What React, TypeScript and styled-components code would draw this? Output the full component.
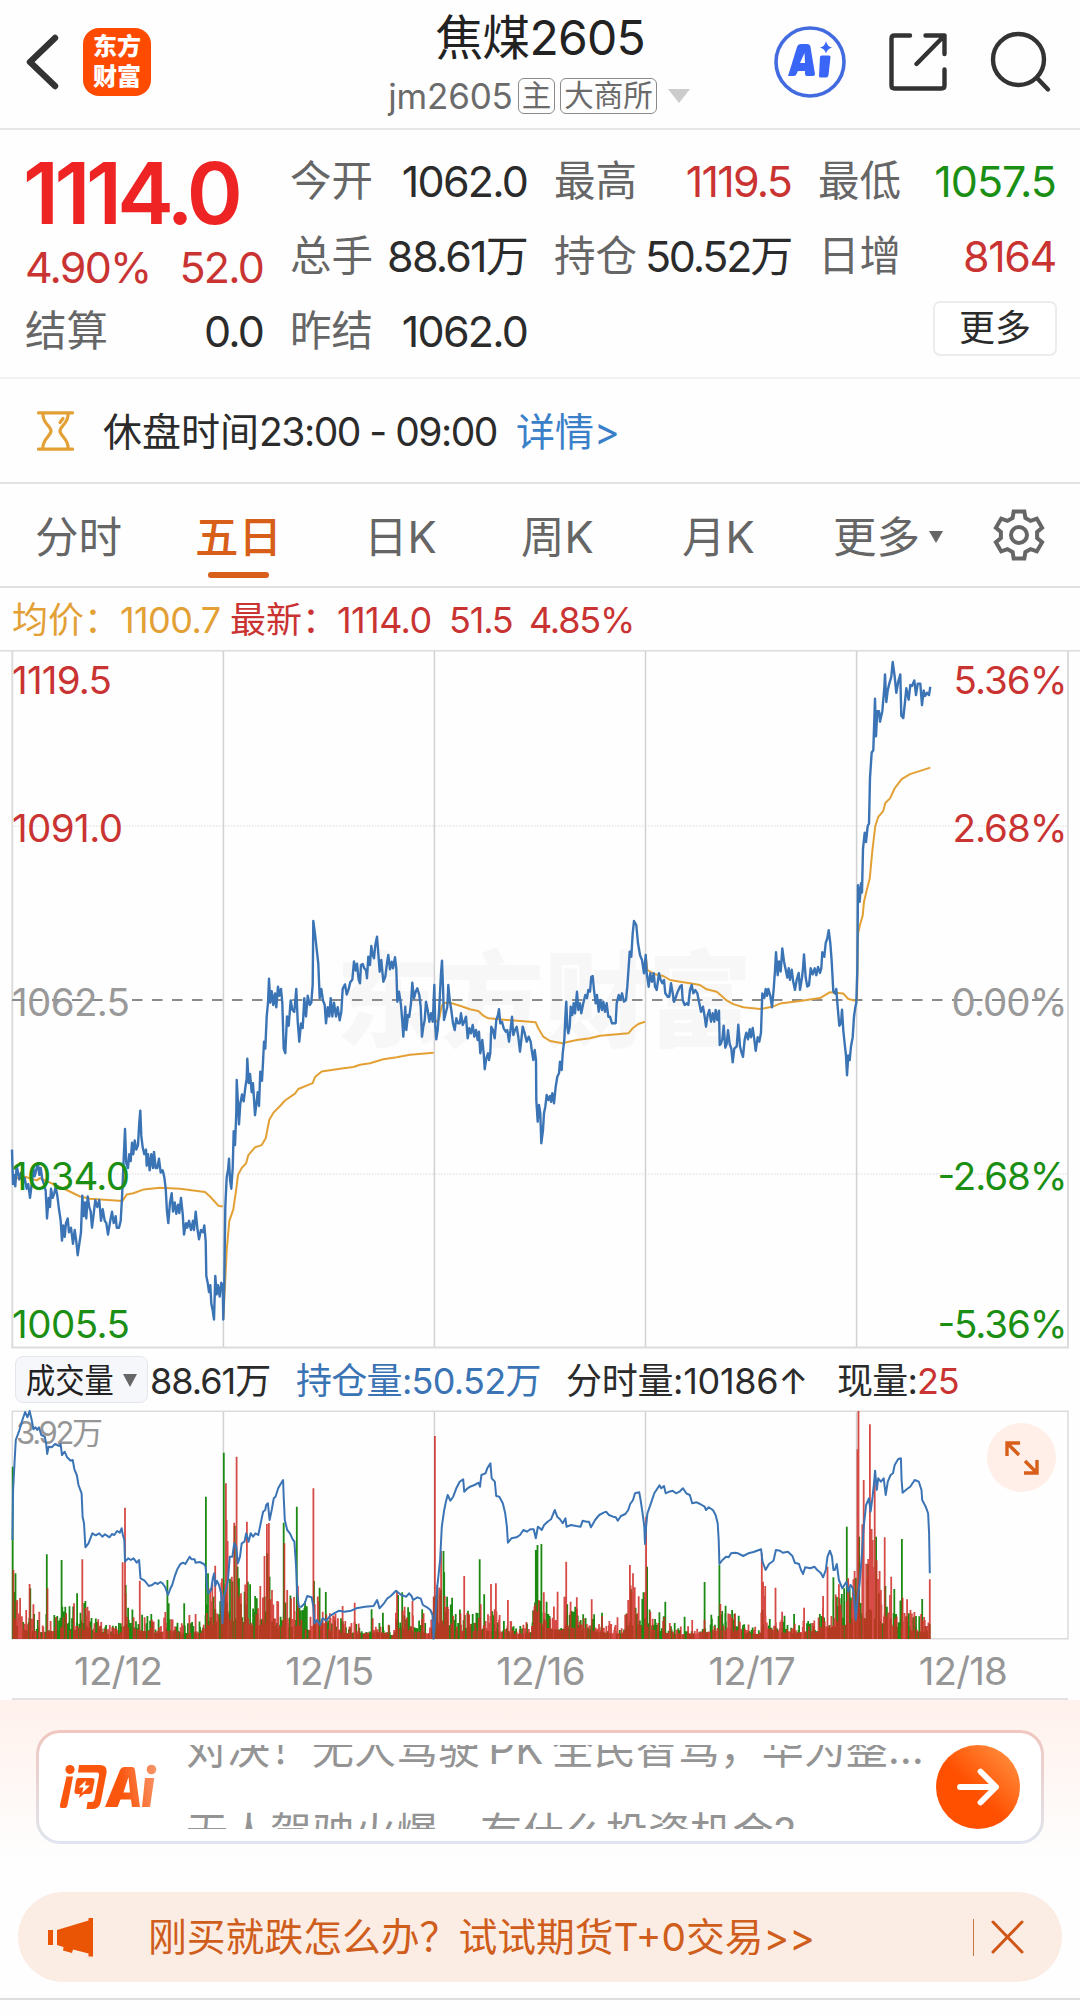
import React from "react";
import styled, { createGlobalStyle } from "styled-components";

const RED = "#c93432";
const GREEN = "#1a8f14";
const BLUE = "#3b74b5";
const ORANGE = "#d75f1a";
const AMBER = "#e2a035";

const GlobalStyle = createGlobalStyle`
  * { box-sizing: border-box; }
  body {
    margin: 0;
    background: #fefefe;
    font-family: Inter, "Noto Sans CJK SC", sans-serif;
    line-height: 1.2;
    color: #2b2b2b;
  }
`;

/* ---------- chart data ---------- */

type Piece = { ox: number; oy: number; sx: number; sy: number; p: number[] };

const left = (p: number[]): Piece => ({ ox: 0, oy: 640, sx: 3, sy: 2.178, p });
const mid = (p: number[]): Piece => ({ ox: 360, oy: 840, sx: 3, sy: 3, p });
const right = (p: number[]): Piece => ({ ox: 720, oy: 640, sx: 3, sy: 2.178, p });
const lowLeft = (p: number[]): Piece => ({ ox: 0, oy: 1340, sx: 2.904, sy: 3, p });
const lowRight = (p: number[]): Piece => ({ ox: 540, oy: 1340, sx: 2.904, sy: 3, p });

const toPoints = (pieces: Piece[]) =>
  pieces
    .map(({ ox, oy, sx, sy, p }) => {
      const out: string[] = [];
      for (let i = 0; i < p.length; i += 2) {
        out.push(`${(ox + p[i] / sx).toFixed(1)},${(oy + p[i + 1] / sy).toFixed(1)}`);
      }
      return out.join(" ");
    })
    .join(" ");

const PRICE = [
  left([36,1110,39,1185,42,1165,46,1190,50,1145,54,1160,58,1175,63,1160,68,1185,74,1172,80,1195,85,1185,90,1215,96,1180,100,1150,104,1168,110,1150,114,1140,118,1165,122,1150,127,1175,132,1185,137,1200,141,1260,146,1215,150,1235,153,1195,158,1215,163,1205,167,1190,172,1210,177,1240,182,1265,186,1308,190,1275,194,1300,198,1270,203,1260,207,1290,213,1280,219,1315,224,1285,229,1310,233,1340,238,1315,243,1290,247,1210,251,1255,255,1225,259,1260,263,1212,268,1235,272,1245,276,1280,281,1250,286,1220,292,1235,298,1220,303,1265,308,1240,314,1265,319,1270,324,1295,330,1268,336,1245,341,1270,347,1255,350,1280,357,1280,362,1265,366,1215,371,1130,375,1065,379,1140,384,1150,388,1120,392,1135,396,1095,400,1120,404,1090,409,1110,414,1100,418,1050,421,1025,424,1080,428,1105,433,1120,438,1110,440,1145,444,1120,449,1155,454,1120,459,1150,462,1115,467,1150,472,1150,477,1130,482,1160,488,1155,493,1170,497,1195,501,1245,505,1270,510,1225,515,1205,519,1245,524,1225,529,1250,534,1230,538,1248,543,1215,548,1250,552,1295,558,1270,562,1280,567,1265,573,1285,579,1265,582,1285,587,1245,592,1280,597,1305,603,1285,609,1290,613,1275,617,1310,619,1385,623,1400,627,1420,631,1405,634,1445,638,1460,642,1480,646,1385,650,1425,654,1405,659,1430,664,1400,668,1405,670,1480,673,1400,676,1235,680,1170,684,1155,687,1130,690,1175,694,1195,698,1150,701,1070,705,1100,709,1030,710,958,714,1010,717,1055,721,1010,726,990,731,1005,736,975,740,955,742,912,746,965,750,945,755,985,759,965,765,1035,770,1005,773,985,777,1015,781,940,786,960,789,920,792,875,796,890,800,820,804,790,807,738,811,790,815,765,820,795,825,770,829,800,834,755,838,775,843,760,847,790,851,890,856,900,861,820,866,840,872,785,877,805,883,810,889,760,893,830,898,875,903,835,908,845,913,780,918,820,923,775,929,795,934,790,938,750,940,612,945,640,951,680,955,705,959,780,964,760,969,785,974,795,978,835,983,800,988,820,992,780,997,820,1002,790,1008,820,1013,800,1019,828,1024,810,1028,760,1035,750,1040,772,1046,760,1051,745,1057,740,1062,700,1067,720,1071,705,1076,740]),
  mid([0,430,3,375,8,372,13,385,18,390,21,415,25,350,30,375,34,318,38,345,42,355,46,315,51,290,55,340,59,395,64,360,70,425,76,410,81,370,85,345,90,388,95,365,99,385,105,352,109,385,112,485,117,455,123,495,127,545,130,590,136,500,139,570,144,525,148,530,153,490,157,428,162,475,167,455,172,445,178,465,182,500,186,590,190,560,194,540,198,485,203,510,208,545,213,520,218,545,220,510,223,435,226,560,229,598,233,570,238,500,243,400,246,362,249,440,252,540,257,520,262,500,265,435,269,480,274,510,279,550,284,570,289,535,294,550,299,550,303,520,308,555,313,545,318,530,323,595,328,565,333,580,338,555,343,590,348,570,353,600,357,575,361,640,367,600,371,640,374,688,379,655,384,640,387,660,391,640,394,560,399,570,404,595,409,540,414,525,417,508,421,550,426,545,431,565,437,575,442,570,447,605,451,575,456,530,460,585,465,570,470,560,475,590,480,635,484,600,488,560,494,580,500,605,506,590,512,605,515,630,520,660,524,630,528,660,529,780,533,845,537,795,541,820,544,910,549,870,552,820,556,800,560,765,565,780,570,768,573,785,577,760,582,790,587,740,592,710,597,700,600,665,605,690,608,640,613,600,617,510,619,485,622,560,625,580,629,560,632,500,637,525,641,490,645,520,651,455,655,510,660,490,664,520,670,490,676,465,681,475,685,450,690,455,694,410,698,408,702,450,707,490,711,465,716,515,721,480,726,510,730,485,735,515,740,490,745,530,750,530,756,550,762,550,767,550,770,490,776,465,781,480,786,460,792,485,798,480,802,440,806,380,809,335,814,350,818,280,822,243,829,255,834,310,840,345,846,360,852,400,857,345,860,400,866,440,871,400,876,425,881,400,885,440,890,450,897,400,902,420,907,430,912,420,916,460,923,470,928,470,933,430,938,460,942,485,948,470,953,455,960,440,965,435,968,480,974,495,980,490,985,495,990,450,995,435,1000,460,1006,450,1012,460,1018,490,1023,515,1029,500,1034,530,1038,560,1043,525,1048,510,1053,545,1058,520,1063,545,1067,510,1072,540,1077,512,1079,615]),
  right([2,880,7,870,11,840,16,888,20,880,24,850,29,880,34,890,38,920,43,890,50,885,55,838,60,885,65,900,69,908,74,870,79,855,84,870,89,848,93,865,98,845,103,870,107,895,113,865,118,875,123,855,127,770,133,780,137,760,141,775,145,760,151,775,156,800,161,760,165,720,168,680,173,730,177,700,182,722,187,672,192,700,197,718,202,735,206,715,210,740,215,718,220,745,225,762,230,740,236,725,240,762,246,735,249,715,252,685,257,735,262,755,267,752,272,715,278,728,284,715,289,730,294,712,300,725,304,715,307,680,313,690,317,660,322,650,326,632,331,660,335,700,340,765,345,770,349,760,353,800,358,840,363,835,366,805,370,850,374,880,378,905,381,948,385,905,389,915,393,885,398,865,402,820,406,800,409,790,412,720,414,534,419,570,423,530,426,550,429,455,434,420,438,440,443,405,447,400,450,300,455,245,460,240,465,128,468,210,472,155,477,155,480,178,487,155,493,105,495,75,499,135,503,110,508,95,514,80,518,48,524,80,529,115,535,90,541,75,544,165,550,170,555,135,559,105,566,130,571,98,576,100,583,88,588,120,593,95,601,95,606,142,611,110,615,122,621,115,627,120,631,102]),
];

const AVERAGES = [
  [left([40,1175,70,1168,110,1177,120,1172,145,1180,160,1185,200,1198,240,1212,270,1217,367,1222,380,1208,400,1205,430,1197,480,1193,540,1195,615,1202,630,1212,655,1232,668,1234])],
  [
    left([670,1480,680,1330,688,1265,700,1240,708,1200,714,1165,725,1150,738,1140,745,1122,765,1105,785,1100,797,1085,808,1045,820,1030,840,1015,855,1003,885,988,895,978,938,965,945,952,965,940,1020,934,1060,930]),
    mid([0,674,30,670,70,658,110,652,150,644,221,638]),
  ],
  [mid([226,540,232,546,238,535,245,498,252,488,275,490,300,497,330,508,355,513,370,527,385,535,440,540,527,547,535,565,550,590,570,603,607,610,650,600,690,595,720,587,805,580,820,563,835,552,855,545])],
  [
    mid([857,345,862,390,885,403,910,408,930,420,960,425,990,430,1020,435,1040,448,1070,455]),
    right([0,772,20,785,40,793,70,800,120,804,160,798,180,792,240,786,300,780,330,767,370,770,385,782,410,786]),
  ],
  [right([411,786,414,640,420,620,428,600,432,570,440,545,449,520,457,460,466,405,475,385,490,372,496,355,510,345,525,322,545,303,570,292,631,278])],
];

const OPEN_INTEREST = [
  lowLeft([36,600,38,450,42,370,46,300,55,275,65,240,73,216,80,232,86,213,92,240,97,268,103,262,108,270,113,262,120,285,130,290,134,310,137,342,141,320,150,322,160,312,172,318,176,312,180,345,188,335,195,352,205,362,211,360,216,388,223,405,228,435,237,460,240,530,244,550,248,622,257,610,268,580,278,586,288,580,297,590,305,583,318,592,325,582,332,585,340,573,348,578,353,565,357,585,361,600,363,665,372,655,380,660,388,655,397,668,404,660,408,715,420,722,432,738,442,735,450,728,458,732,466,726,472,730,480,742,488,765,495,745,500,735,507,710,515,688,524,672,532,668,538,672,551,650,556,658,565,658,568,668,580,666,592,672,597,680,601,740,605,760,613,750,618,715,622,700,625,738,630,722,636,735,642,760,646,850,650,770,656,750,662,720,667,650,675,650,680,610,686,620,691,670,697,650,702,610,710,605,715,580,722,605,728,580,735,590,742,580,750,585,757,550,764,515,770,510,773,495,778,490,783,540,789,510,795,475,800,470,808,445,815,432,822,420,824,470,827,540,834,570,842,580,850,598,855,605,860,680,863,760,868,800,875,800,885,790,892,768,905,772,910,800,913,850,920,840,930,855,937,835,948,842,958,828,970,820,985,812,1000,815,1020,812,1035,805,1060,800,1085,798,1095,780,1102,805,1115,790,1125,775,1135,768,1150,752,1165,765,1180,770,1188,760,1195,768,1200,780,1212,772,1222,776,1228,795,1240,802,1250,810,1256,825,1259,896,1263,850,1270,740,1278,660,1283,560,1290,510,1295,485,1300,465,1308,482,1316,470,1325,445,1335,425,1345,418,1348,455,1358,445,1365,440,1378,435,1390,428,1394,440,1398,405,1410,400,1415,385,1424,370,1428,415,1437,425,1441,468,1450,470,1460,490,1467,520,1472,560,1475,608,1485,595,1500,592,1510,585,1520,570,1530,575,1540,568,1550,568,1556,595,1562,560]),
  lowRight([0,565,5,570,12,555,22,545,32,538,43,510,50,530,58,538,66,550,74,535,77,560,90,555,105,558,118,560,124,542,135,545,142,545,148,562,160,540,172,525,185,518,192,515,200,525,212,530,220,532,226,542,235,528,248,522,256,510,262,492,270,480,276,460,288,457,292,480,298,520,303,560,305,612,308,560,312,520,322,490,332,460,347,436,352,445,360,438,365,460,375,455,385,452,395,460,405,455,415,445,425,460,435,465,442,490,455,487,465,492,478,500,482,510,490,502,502,510,510,525,516,550,519,600,521,672,530,660,540,650,548,652,555,640,565,638,575,640,590,648,605,640,620,636,642,628,646,665,655,690,665,672,678,662,685,630,697,632,705,638,720,635,733,648,740,668,752,672,758,690,764,702,770,682,785,685,797,680,805,690,815,698,822,712,830,690,835,650,842,632,848,650,852,690,856,690,862,672,868,720,878,745,890,725,895,755,902,735,908,745,912,770,917,840,922,780,928,730,935,640,940,560,947,495,955,475,960,515,966,470,970,430,973,392,978,450,982,415,990,425,998,415,1004,465,1010,425,1018,405,1025,400,1030,375,1040,358,1048,355,1050,420,1053,458,1065,448,1075,440,1088,420,1100,425,1108,450,1110,480,1120,500,1127,520,1130,580,1132,700]),
];

/* tall volume bars: x, top, 1 = up (red) / 0 = down (green) */
const SPIKES_A = [37,380,0,39,690,1,45,700,0,50,780,1,86,732,1,88,745,0,97,793,1,114,815,1,136,643,0,138,745,1,179,660,0,181,800,0,192,820,1,215,790,1,224,760,0,239,658,1,248,783,0,254,800,1,356,667,1,363,503,1,365,735,0,372,803,0,406,722,1,428,828,0,486,720,0,490,790,0,535,790,0,550,825,1,568,822,1,598,470,0,604,700,0,610,745,1,620,770,0,625,677,1,650,338,0,656,430,1,658,540,1,661,603,1,668,735,0,680,548,1,682,557,0,687,350,1,690,680,0,694,715,0,700,760,1,717,545,1,720,725,0,741,768,0,756,738,1,768,648,1,775,552,1,776,640,0,781,549,1,783,710,0,790,750,1,805,783,1,824,548,0,826,610,1,834,750,1,845,775,1,862,500,0,865,738,1,910,445,1,912,723,0,928,743,0,946,756,0,958,820,1,995,798,1,1030,788,1,1079,808,0,1112,818,0,1153,752,1,1156,765,0,1168,757,0,1175,800,1,1198,783,1,1226,808,0,1230,820,1,1260,772,0,1263,288,1,1269,735,1,1281,633,1,1288,633,0,1290,697,0,1300,800,1,1313,773,0,1348,708,1,1359,812,0,1393,658,0,1396,793,1,1406,763,0,1426,732,1,1440,730,1,1475,780,1,1556,630,0,1561,615,0,1565,780,1];
const SPIKES_B = [4,612,0,11,757,1,28,828,0,51,755,1,71,770,1,76,665,1,79,793,0,89,785,1,107,772,1,150,778,1,180,818,0,225,832,1,256,780,1,261,675,1,264,747,0,270,700,1,275,742,1,297,777,0,305,757,1,308,530,1,311,680,0,364,785,0,420,830,0,442,840,1,478,726,0,521,675,0,524,792,1,539,797,0,558,810,0,577,828,0,644,640,1,648,725,1,654,738,1,684,743,1,703,815,1,738,822,0,767,803,1,822,768,1,835,680,1,852,712,0,868,733,1,870,775,0,883,745,0,891,560,0,895,715,1,910,718,1,922,328,1,925,213,1,927,590,0,936,553,1,940,420,1,948,707,1,953,657,1,958,253,1,963,567,1,966,600,1,972,430,1,976,590,0,984,760,0,990,750,1,1001,592,1,1003,738,0,1020,710,1,1029,747,0,1051,597,0,1053,773,1,1066,778,1,1076,810,1,1092,828,0,1110,777,0,1132,718,1];

/* typical bar height along the axis: x, height */
const ENVELOPE = [36,190,60,105,120,60,180,85,240,100,280,60,340,34,352,55,362,150,380,100,420,80,460,52,490,85,520,42,592,50,600,150,640,165,660,220,700,190,740,130,780,190,810,120,860,130,900,90,920,120,960,75,1000,50,1060,40,1100,68,1140,24,1155,105,1200,75,1250,42,1260,180,1285,160,1320,85,1380,72,1440,80,1500,42,1540,60,1568,140,1618,90,1668,100,1718,85,1758,54,1808,38,1828,150,1868,155,1888,95,1928,60,1968,36,2008,40,2048,60,2088,85,2128,82,2168,46,2208,42,2214,130,2248,85,2288,52,2348,60,2368,46,2398,105,2438,150,2468,160,2498,230,2538,240,2568,155,2608,130,2648,75,2700,66];

const envelopeAt = (x: number) => {
  for (let i = 2; i < ENVELOPE.length; i += 2) {
    if (x <= ENVELOPE[i]) {
      const x0 = ENVELOPE[i - 2];
      const t = (x - x0) / (ENVELOPE[i] - x0);
      return ENVELOPE[i - 1] + t * (ENVELOPE[i + 1] - ENVELOPE[i - 1]);
    }
  }
  return 40;
};

const FLOOR = 1639;

const buildVolume = () => {
  let seed = 2605;
  const rnd = () => {
    seed = (seed * 1103515245 + 12345) % 2147483648;
    return seed / 2147483648;
  };
  let up = "";
  let down = "";
  const bar = (x: number, top: number, isUp: boolean) => {
    const d = `M${x.toFixed(1)} ${FLOOR}V${top.toFixed(1)}`;
    if (isUp) up += d;
    else down += d;
  };
  for (let x = 12.8; x < 930; x += 0.61) {
    const r = rnd();
    const h = (envelopeAt(x * 2.904) / 3) * (0.24 + 0.85 * r * r * r) + 1.5;
    bar(x, FLOOR - h, rnd() < 0.48);
  }
  for (let i = 0; i < SPIKES_A.length; i += 3) {
    bar(SPIKES_A[i] / 2.904, 1340 + SPIKES_A[i + 1] / 3, SPIKES_A[i + 2] === 1);
  }
  for (let i = 0; i < SPIKES_B.length; i += 3) {
    bar(540 + SPIKES_B[i] / 2.904, 1340 + SPIKES_B[i + 1] / 3, SPIKES_B[i + 2] === 1);
  }
  return { up, down };
};

const VOLUME = buildVolume();
const DAY_LINES = [223.4, 434.4, 645.5, 856.6];

/* ---------- layout parts ---------- */

const Page = styled.main`
  width: 1080px;
  height: 2014px;
  overflow: hidden;
  display: flex;
  flex-direction: column;
`;

const Header = styled.header`
  flex: none;
  height: 130px;
  border-bottom: 2px solid #e6e6e6;
  display: grid;
  grid-template-columns: 360px 1fr 360px;
`;

const HeaderSide = styled.div<{ $end?: boolean }>`
  display: flex;
  align-items: center;
  height: 123px;
  justify-content: ${(p) => (p.$end ? "flex-end" : "flex-start")};
  padding: ${(p) => (p.$end ? "0 28px 0 0" : "0 0 0 24px")};
  gap: ${(p) => (p.$end ? "43px" : "21px")};
`;

const AppBadge = styled.div`
  width: 68px;
  height: 68px;
  border-radius: 16px;
  background: #ff4a02;
  color: #fff;
  font: 900 24px/30px "Noto Sans CJK SC", sans-serif;
  text-align: center;
  padding-top: 2px;
`;

const TitleBlock = styled.div`
  display: flex;
  flex-direction: column;
  align-items: center;
`;

const Title = styled.h1`
  margin: 0;
  font-size: 48px;
  font-weight: 380;
  line-height: 76px;
  letter-spacing: -0.8px;
  color: #222;
`;

const SubTitle = styled.div`
  display: flex;
  align-items: center;
  height: 36px;
  margin: 2px 2px 0 0;
  gap: 5px;
  color: #6b6b6b;
`;

const Code = styled.span`
  font-size: 35px;
  font-weight: 370;
  line-height: 36px;
  letter-spacing: -0.2px;
`;

const Tag = styled.span`
  height: 36px;
  border: 1.5px solid #8a8a8a;
  border-radius: 6px;
  padding: 0 3px;
  font-size: 29.5px;
  line-height: 33px;
`;

const Triangle = styled.span<{ $w: number; $h: number; $c: string; $ml?: number }>`
  width: 0;
  height: 0;
  margin-left: ${(p) => p.$ml ?? 0}px;
  border-left: ${(p) => p.$w / 2}px solid transparent;
  border-right: ${(p) => p.$w / 2}px solid transparent;
  border-top: ${(p) => p.$h}px solid ${(p) => p.$c};
`;

const Quote = styled.section`
  flex: none;
  height: 249px;
  border-bottom: 2px solid #f2f2f2;
  padding: 14px 24px 0 25px;
  display: flex;
  gap: 27px;
`;

const Main = styled.div`
  width: 238px;
`;

const Row = styled.div<{ $h: number }>`
  display: flex;
  align-items: center;
  justify-content: space-between;
  height: ${(p) => p.$h}px;
`;

const LastPrice = styled.span`
  font-size: 85px;
  font-weight: 600;
  letter-spacing: -4.5px;
  line-height: 98px;
  margin-left: -2px;
  padding-top: 1px;
  color: #ee2424;
`;

const Label = styled.span`
  font-size: 41.5px;
  color: #666;
`;

const Value = styled.span<{ $c?: string; $ls?: number }>`
  font-size: 43px;
  font-weight: 370;
  letter-spacing: ${(p) => p.$ls ?? -1.8}px;
  color: ${(p) => p.$c ?? "#2b2b2b"};
  white-space: nowrap;
`;

const Stats = styled.div`
  display: grid;
  grid-template-columns: 237px 237px 238px;
  grid-auto-rows: 75px;
  column-gap: 27px;
`;

const Cell = styled.div<{ $end?: boolean }>`
  display: flex;
  align-items: center;
  justify-content: ${(p) => (p.$end ? "flex-end" : "space-between")};
`;

const MoreButton = styled.button`
  width: 124px;
  height: 55px;
  margin: -7px -1px 0 0;
  padding: 0;
  border: 2px solid #ebeced;
  border-radius: 7px;
  background: #fff;
  font-family: inherit;
  font-size: 36px;
  line-height: 51px;
  color: #2b2b2b;
`;

const Notice = styled.section`
  flex: none;
  height: 105px;
  border-bottom: 2px solid #e2e2e2;
  padding: 0 37px;
  display: flex;
  align-items: center;
  font-size: 39px;
`;

const NoticeText = styled.span`
  margin-left: 29px;
  padding-top: 4px;
  width: 413px;
  white-space: nowrap;
`;

const Tight = styled.span<{ $ls: number; $c?: string }>`
  letter-spacing: ${(p) => p.$ls}px;
  color: ${(p) => p.$c ?? "inherit"};
  font-weight: 370;
`;

const NoticeLink = styled.a`
  padding-top: 4px;
  color: #3a80c9;
`;

const Tabs = styled.nav`
  flex: none;
  height: 104px;
  border-bottom: 2px solid #e0e0e0;
  display: flex;
  align-items: center;
  padding-left: 35px;
`;

const Tab = styled.span<{ $w: number; $on?: boolean }>`
  width: ${(p) => p.$w}px;
  height: 104px;
  padding-top: 4px;
  display: flex;
  align-items: center;
  position: relative;
  font-size: 43.5px;
  font-weight: ${(p) => (p.$on ? 500 : 370)};
  color: ${(p) => (p.$on ? ORANGE : "#666")};
  &::after {
    content: "";
    display: ${(p) => (p.$on ? "block" : "none")};
    position: absolute;
    left: 13px;
    bottom: 9px;
    width: 61px;
    height: 6px;
    border-radius: 3px;
    background: ${ORANGE};
  }
`;

const Legend = styled.div`
  flex: none;
  height: 62px;
  display: flex;
  align-items: center;
  padding: 4px 0 0 12px;
  font-size: 36px;
  white-space: nowrap;
`;

const LegendItem = styled.span<{ $w: number; $c: string; $ls?: number }>`
  width: ${(p) => p.$w}px;
  color: ${(p) => p.$c};
  letter-spacing: ${(p) => p.$ls ?? -1.6}px;
  font-weight: 370;
  white-space: nowrap;
`;

const ChartSvg = styled.svg`
  display: block;
  flex: none;
  font-family: Inter, "Noto Sans CJK SC", sans-serif;
`;

const VolumeBar = styled.div`
  flex: none;
  height: 61px;
  padding-left: 15px;
  display: flex;
  align-items: center;
  font-size: 36px;
  line-height: 43px;

  > span {
    padding-top: 4px;
  }
`;

const Picker = styled.button`
  width: 133px;
  height: 47px;
  flex: none;
  margin-right: 2px;
  border: 1.5px solid #e3e6ec;
  border-radius: 8px;
  background: #f6f7fa;
  display: flex;
  align-items: center;
  padding: 1px 0 0 10px;
  font-family: inherit;
`;

const PickerText = styled.span`
  font-size: 34px;
  line-height: 41px;
  color: #222;
  width: 88px;
  margin-right: 9px;
  white-space: nowrap;
  transform: scaleX(0.86);
  transform-origin: left center;
`;

const VolumePanel = styled.div`
  flex: none;
  position: relative;
  height: 230px;
`;

const ExpandButton = styled.button`
  position: absolute;
  right: 24px;
  top: 13px;
  width: 69px;
  height: 69px;
  padding: 0;
  border: 0;
  border-radius: 50%;
  background: #ffefe8;
  display: flex;
  align-items: center;
  justify-content: center;
`;

const Dates = styled.div`
  flex: none;
  margin: 0 12px;
  height: 60px;
  border-bottom: 2px solid #e3e1e1;
  display: grid;
  grid-template-columns: repeat(5, 1fr);
`;

const DateLabel = styled.span`
  text-align: center;
  font-size: 38.5px;
  font-weight: 370;
  line-height: 62px;
  letter-spacing: -0.8px;
  padding-left: 1px;
  color: #969696;
`;

const Promo = styled.section`
  flex: none;
  height: 192px;
  padding: 30px 36px 0;
  background: linear-gradient(#fff1ec, #fefefe 85%);
`;

const AskFrame = styled.div`
  height: 114px;
  padding: 3px;
  border-radius: 24px;
  background: linear-gradient(#f0c6be, #dfe5ef);
`;

const AskCard = styled.div`
  height: 108px;
  border-radius: 21px;
  background: #fff;
  display: flex;
  align-items: center;
  padding: 0 21px;
`;

const AskLogo = styled.div`
  width: 126px;
  height: 46px;
`;

const Ticker = styled.div`
  width: 750px;
  height: 84px;
  overflow: hidden;
  color: #949494;
`;

const TickerLine = styled.p<{ $shift?: number }>`
  margin: ${(p) => p.$shift ?? 0}px 0 0;
  height: 84px;
  font-size: 42px;
  font-weight: 370;
  line-height: 84px;
  word-spacing: -3.5px;
  white-space: nowrap;
`;

const GoButton = styled.button`
  width: 84px;
  height: 84px;
  padding: 0;
  border: 0;
  border-radius: 50%;
  background: linear-gradient(45deg, #ff5000 45%, #ff8c3c 90%);
  display: flex;
  align-items: center;
  justify-content: center;
`;

const Tip = styled.aside`
  flex: none;
  height: 90px;
  margin: 0 18px;
  border-radius: 45px;
  background: #fcede4;
  display: flex;
  align-items: center;
  padding: 0 38px 0 30px;
  color: #cf5d1c;
  font-size: 38.8px;
`;

const TipText = styled.span`
  flex: 1;
  margin-left: 54px;
  font-weight: 370;
  white-space: nowrap;
`;

const TipDivider = styled.i`
  width: 1.5px;
  height: 37px;
  margin-right: 17px;
  background: #c9784a;
`;

const BottomRule = styled.hr`
  flex: none;
  width: 100%;
  height: 2px;
  margin: 16px 0 0;
  border: 0;
  background: #dedede;
`;

/* ---------- icons ---------- */

const BackIcon = () => (
  <svg width="38" height="60" viewBox="0 0 38 60" fill="none" stroke="#333" strokeWidth="6.400" strokeLinecap="round" strokeLinejoin="round">
    <path d="M31 6L6 30L31 54" />
  </svg>
);

const AiIcon = () => (
  <svg width="72" height="74" viewBox="0 0 72 74">
    <circle cx="34" cy="37" r="34" fill="none" stroke="#426be0" strokeWidth="3.600" transform="translate(2 0)" />
    <path fillRule="evenodd" fill="#3a66f8" d="M14 51L23 22Q24 19 27 19H33Q36 19 36.500 22L41 49Q41 51 39 51H33Q31 51 31 49V46H24L22.500 49Q22 51 20 51ZM26 38H31L30.500 28Z" />
    <path fill="#3a66f8" d="M48 30.500H55Q56.500 30.500 56.500 32L54.500 50Q54 52.500 52 52.500H46.500Q45 52.500 45 51L46 32Q46 30.500 48 30.500ZM52 16Q53 21.500 58 22.500Q53 24 52 28.500Q51 24 46 22.500Q51 21.500 52 16Z" />
  </svg>
);

const ShareIcon = () => (
  <svg width="58" height="60" viewBox="0 0 58 60" fill="none" stroke="#333" strokeWidth="4.400" strokeLinecap="round" strokeLinejoin="round">
    <path d="M21 3.500H5.500Q2.500 3.500 2.500 6.500V53.500Q2.500 56.500 5.500 56.500H52.500Q55.500 56.500 55.500 53.500V37.500" />
    <path d="M36.500 3.500H55.500V22M55.500 3.500L27.500 32" />
  </svg>
);

const SearchIcon = () => (
  <svg width="62" height="62" viewBox="0 0 62 62" fill="none" stroke="#333" strokeWidth="4.400" strokeLinecap="round">
    <circle cx="28.500" cy="28.500" r="25.500" />
    <path d="M47.500 47.500L58 58.500" />
  </svg>
);

const HourglassIcon = () => (
  <svg width="37" height="40" viewBox="0 0 37 40" fill="none" stroke={AMBER} strokeWidth="3.200" strokeLinecap="round">
    <path d="M1.500 1.800H35.500M1.500 38.200H35.500" />
    <path d="M6 2.500C5 12 14 15 14 20S5 28 6 37.500M31 2.500C32 12 23 15 23 20S32 28 31 37.500" />
    <path d="M26 7.500L23 11.500" />
  </svg>
);

const gearPath = () => {
  let d = "";
  for (let i = 0; i < 6; i++) {
    const a = (i * 60 - 90) * (Math.PI / 180);
    const pt = (r: number, off: number) =>
      `${(26 + r * Math.cos(a + off)).toFixed(1)} ${(26 + r * Math.sin(a + off)).toFixed(1)}`;
    d += `${i ? "L" : "M"}${pt(18.300, -0.36)}L${pt(24.200, -0.22)}L${pt(24.200, 0.22)}L${pt(18.300, 0.36)}`;
  }
  return d + "Z";
};

const GearIcon = () => (
  <svg width="52" height="52" viewBox="0 0 52 52" fill="none" stroke="#666" strokeWidth="4" strokeLinejoin="miter">
    <path d={gearPath()} />
    <circle cx="26" cy="26" r="8" />
  </svg>
);

const ExpandIcon = () => (
  <svg width="34" height="34" viewBox="0 0 34 34" fill="none" stroke={ORANGE} strokeWidth="3.400">
    <path d="M2 15V2H15M2 2L14 14M32 19V32H19M32 32L20 20" />
  </svg>
);

const AskLogoIcon = () => (
  <svg width="100" height="48" viewBox="0 0 100 48">
    <defs>
      <linearGradient id="ask" gradientUnits="userSpaceOnUse" x1="0" x2="98" y1="20" y2="0">
        <stop offset="0.6" stopColor="#fb560d" />
        <stop offset="1" stopColor="#f79a70" />
      </linearGradient>
    </defs>
    <g fill="url(#ask)">
      <circle cx="10" cy="5.500" r="4.600" />
      <path d="M6.500 12.500H13L7.500 41Q7 44 4.500 44H2Q-0.500 44 0 41Z" />
      <path d="M19 1H40Q47.500 1 46.500 9L41 37Q39.500 45 33 45H26.500L27.500 38H31.500Q34 38 34.500 35.500L39 11.500Q39.500 8.500 37 8.500H18Z" />
      <path fillRule="evenodd" d="M18 14H32Q35 14 34.500 17L32.500 27Q32 30 28.500 30H24L19 34L20 30H17Q14 30 14.500 27L16 17Q16.500 14 18 14ZM26 16.500L18.500 23.500H23.500L22 29L30 21.500H25Z" />
      <path fillRule="evenodd" d="M45 43L60 6Q61.500 3 64 3H72Q74.500 3 75 6L80 43H72L71 35.500H60.500L57.500 43ZM63.500 28.500H70L68.500 13Z" />
      <path d="M85 14H94Q94.500 14 94 16L90 43H82Z" />
      <circle cx="91.500" cy="5.500" r="4.800" />
    </g>
  </svg>
);

const ArrowIcon = () => (
  <svg width="46" height="40" viewBox="0 0 46 40" fill="none" stroke="#fff" strokeWidth="5.800" strokeLinecap="round" strokeLinejoin="round">
    <path d="M5 20H41M25.500 4.500L41 20L25.500 35.500" />
  </svg>
);

const HornIcon = () => (
  <svg width="46" height="40" viewBox="0 0 46 40" fill="#e95504">
    <path d="M0 13H5V28H0ZM9 13L40.500 3.500V1H45V39.500H40.500V36.500L25 32.500L24 36L15 33.500L15.500 30L9 28Z" />
  </svg>
);

const CloseIcon = () => (
  <svg width="33" height="34" viewBox="0 0 33 34" stroke="#cf5617" strokeWidth="3" strokeLinecap="round">
    <path d="M2 2L31 32M31 2L2 32" />
  </svg>
);

/* ---------- charts ---------- */

const LEFT_AXIS: [string, number, string, number][] = [
  ["1119.5", 693.5, RED, 100],
  ["1091.0", 841.5, RED, 111],
  ["1062.5", 1015.5, "#999", 118],
  ["1034.0", 1189.5, GREEN, 118],
  ["1005.5", 1337.5, GREEN, 118],
];

const RIGHT_AXIS: [string, number, string, number][] = [
  ["5.36%", 693.5, RED, 114],
  ["2.68%", 841.5, RED, 115],
  ["0.00%", 1015.5, "#999", 116],
  ["-2.68%", 1189.5, GREEN, 130],
  ["-5.36%", 1337.5, GREEN, 130],
];

const PriceChart = () => (
  <ChartSvg width="1080" height="699" viewBox="0 650 1080 699">
    <text x="336" y="1039" fontSize="104" fontWeight="900" fill="#f7f7f7">东方财富</text>
    <g stroke="#dcdcdc" strokeWidth="1.500" fill="none">
      <path d="M12 826H1068M12 1174H1068" strokeWidth="1.200" strokeDasharray="1.500 1.500" />
      <path d="M0 650.800H1080" />
      {DAY_LINES.map((x) => (
        <path key={x} d={`M${x} 651V1348`} stroke="#d2d2d2" />
      ))}
      <path d="M12.300 651V1347.500H1068V651" strokeWidth="2" />
    </g>
    <path d="M12 1000H1068" stroke="#8a8a8a" strokeWidth="1.800" strokeDasharray="10.500 9.500" />
    {AVERAGES.map((day, i) => (
      <polyline key={i} points={toPoints(day)} fill="none" stroke={AMBER} strokeWidth="2" strokeLinejoin="round" />
    ))}
    <polyline points={toPoints(PRICE)} fill="none" stroke={BLUE} strokeWidth="2.400" strokeLinejoin="round" />
    <g fontSize="38.500" fontWeight="370">
      {LEFT_AXIS.map(([t, y, c, w]) => (
        <text key={t} x="12" y={y} fill={c} textLength={w}>{t}</text>
      ))}
      {RIGHT_AXIS.map(([t, y, c, w]) => (
        <text key={t} x={1067.5 - w} y={y} fill={c} textLength={w}>{t}</text>
      ))}
    </g>
  </ChartSvg>
);

const VolumeChart = () => (
  <ChartSvg width="1080" height="230" viewBox="0 1410 1080 230">
    <g stroke="#dcdcdc" strokeWidth="1.500" fill="none">
      {DAY_LINES.map((x) => (
        <path key={x} d={`M${x} 1411V1638`} stroke="#d2d2d2" />
      ))}
      <path d="M12.300 1411.300H1068V1638.700H12.300Z" />
    </g>
    <text x="16" y="1443.500" fontSize="31" fontWeight="370" fill="#969696" textLength="87">3.92万</text>
    <path d={VOLUME.down} stroke="#1c8a12" strokeWidth="1.800" />
    <path d={VOLUME.up} stroke="#cf2c24" strokeWidth="1.800" strokeOpacity="0.85" />
    <polyline points={toPoints(OPEN_INTEREST)} fill="none" stroke={BLUE} strokeWidth="2" strokeLinejoin="round" />
  </ChartSvg>
);

/* ---------- page ---------- */

export default function App() {
  return (
    <Page>
      <GlobalStyle />
      <Header>
        <HeaderSide>
          <BackIcon />
          <AppBadge>
            东方
            <br />
            财富
          </AppBadge>
        </HeaderSide>
        <TitleBlock>
          <Title>焦煤2605</Title>
          <SubTitle>
            <Code>jm2605</Code>
            <Tag>主</Tag>
            <Tag>大商所</Tag>
            <Triangle $w={22} $h={14} $c="#ccc" $ml={6} />
          </SubTitle>
        </TitleBlock>
        <HeaderSide $end>
          <AiIcon />
          <ShareIcon />
          <SearchIcon />
        </HeaderSide>
      </Header>

      <Quote>
        <Main>
          <Row $h={98}>
            <LastPrice>1114.0</LastPrice>
          </Row>
          <Row $h={52}>
            <Value $c={RED}>4.90%</Value>
            <Value $c={RED}>52.0</Value>
          </Row>
          <Row $h={75}>
            <Label>结算</Label>
            <Value>0.0</Value>
          </Row>
        </Main>
        <Stats>
          <Cell><Label>今开</Label><Value>1062.0</Value></Cell>
          <Cell><Label>最高</Label><Value $c={RED}>1119.5</Value></Cell>
          <Cell><Label>最低</Label><Value $c={GREEN} $ls={-1}>1057.5</Value></Cell>
          <Cell><Label>总手</Label><Value>88.61万</Value></Cell>
          <Cell><Label>持仓</Label><Value $ls={-2.2}>50.52万</Value></Cell>
          <Cell><Label>日增</Label><Value $c={RED} $ls={-1.4}>8164</Value></Cell>
          <Cell><Label>昨结</Label><Value>1062.0</Value></Cell>
          <Cell />
          <Cell $end><MoreButton>更多</MoreButton></Cell>
        </Stats>
      </Quote>

      <Notice>
        <HourglassIcon />
        <NoticeText>
          休盘时间<Tight $ls={-1.5}>23:00 - 09:00</Tight>
        </NoticeText>
        <NoticeLink>详情&gt;</NoticeLink>
      </Notice>

      <Tabs>
        <Tab $w={160}>分时</Tab>
        <Tab $w={169} $on>五日</Tab>
        <Tab $w={157}>日K</Tab>
        <Tab $w={161}>周K</Tab>
        <Tab $w={151}>月K</Tab>
        <Tab $w={160}>
          更多
          <Triangle $w={14} $h={12} $c="#666" $ml={9} />
        </Tab>
        <GearIcon />
      </Tabs>

      <Legend>
        <LegendItem $w={108} $c={AMBER} $ls={0}>均价：</LegendItem>
        <LegendItem $w={110} $c={AMBER} $ls={-0.6}>1100.7</LegendItem>
        <LegendItem $w={107} $c={RED} $ls={0}>最新：</LegendItem>
        <LegendItem $w={112} $c={RED} $ls={-0.6}>1114.0</LegendItem>
        <LegendItem $w={80} $c={RED} $ls={-1.2}>51.5</LegendItem>
        <LegendItem $w={110} $c={RED} $ls={-1.2}>4.85%</LegendItem>
      </Legend>
      <PriceChart />

      <VolumeBar>
        <Picker>
          <PickerText>成交量</PickerText>
          <Triangle $w={15} $h={13} $c="#666" />
        </Picker>
        <LegendItem $w={146} $c="#2b2b2b" $ls={-1}>88.61万</LegendItem>
        <LegendItem $w={270} $c={BLUE} $ls={-0.7}>持仓量:50.52万</LegendItem>
        <LegendItem $w={271} $c="#2b2b2b" $ls={-0.3}>分时量:10186↑</LegendItem>
        <LegendItem $w={130} $c="#2b2b2b" $ls={-0.8}>
          现量:<Tight $ls={-1.2} $c={RED}>25</Tight>
        </LegendItem>
      </VolumeBar>
      <VolumePanel>
        <VolumeChart />
        <ExpandButton><ExpandIcon /></ExpandButton>
      </VolumePanel>
      <Dates>
        {["12/12", "12/15", "12/16", "12/17", "12/18"].map((d) => (
          <DateLabel key={d}>{d}</DateLabel>
        ))}
      </Dates>

      <Promo>
        <AskFrame>
          <AskCard>
            <AskLogo><AskLogoIcon /></AskLogo>
            <Ticker>
              <TickerLine $shift={-38}>对决！无人驾驶 PK 全民智驾，华为整...</TickerLine>
              <TickerLine>无人驾驶火爆，有什么投资机会?</TickerLine>
            </Ticker>
            <GoButton><ArrowIcon /></GoButton>
          </AskCard>
        </AskFrame>
      </Promo>
      <Tip>
        <HornIcon />
        <TipText>刚买就跌怎么办？试试期货T+0交易&gt;&gt;</TipText>
        <TipDivider />
        <CloseIcon />
      </Tip>
      <BottomRule />
    </Page>
  );
}
